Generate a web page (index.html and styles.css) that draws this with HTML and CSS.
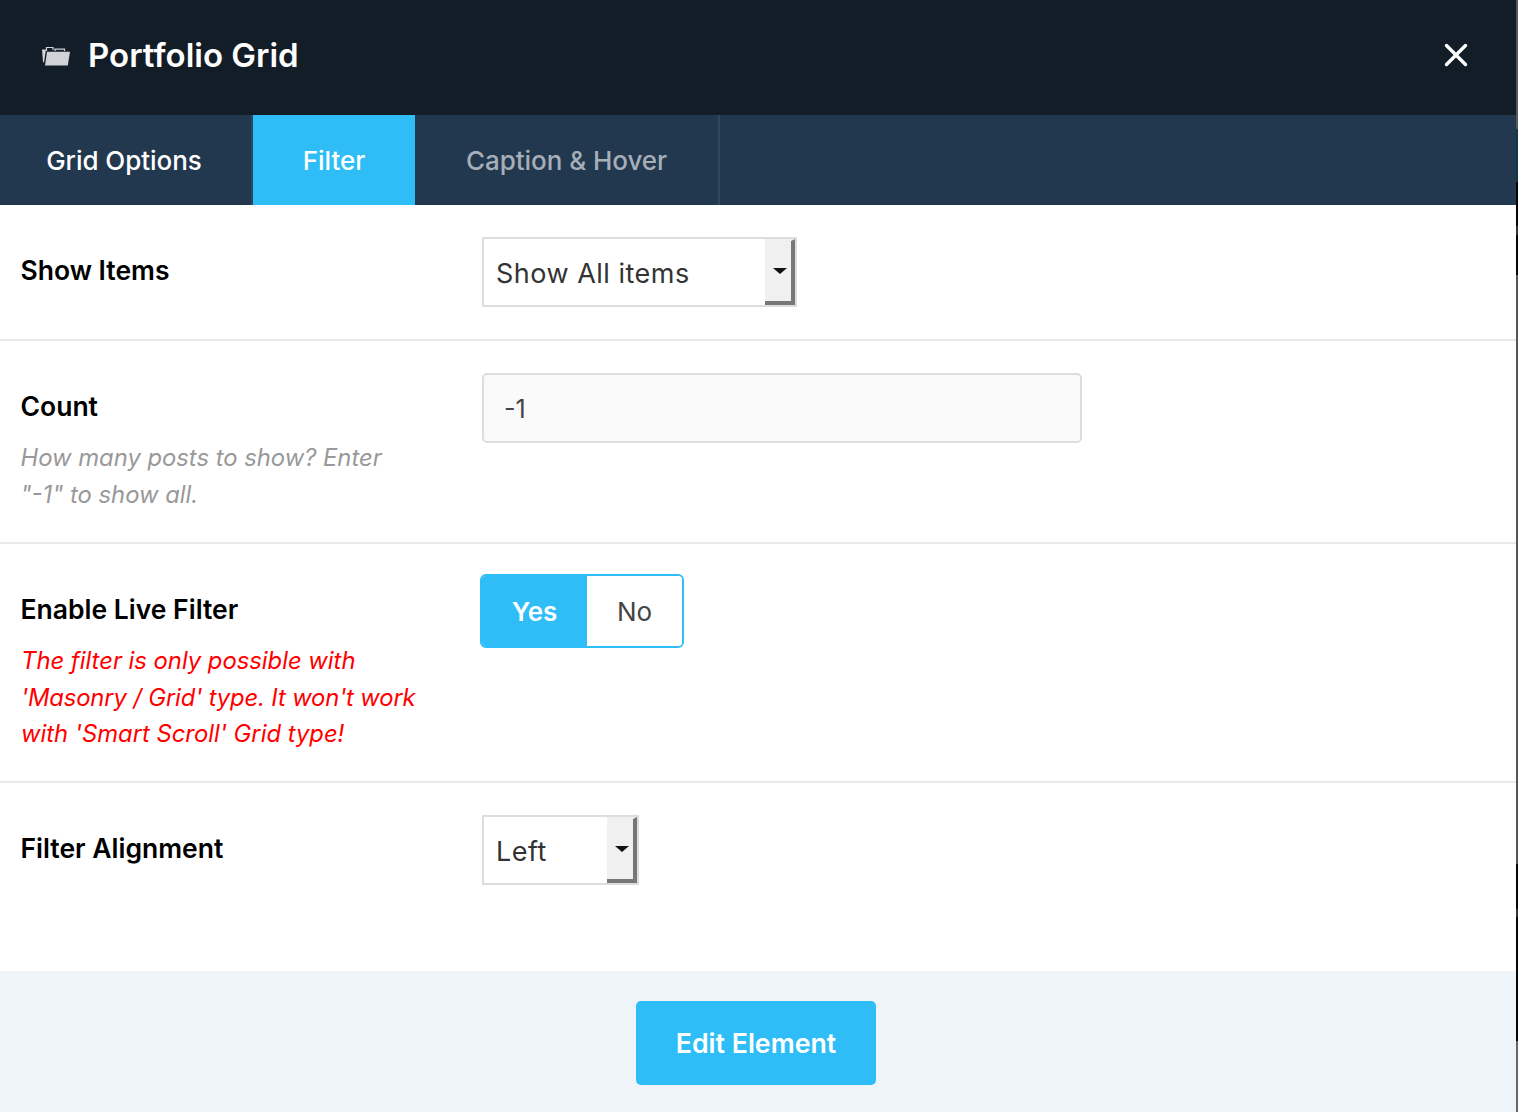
FILE: index.html
```html
<!DOCTYPE html>
<html lang="en">
<head>
<meta charset="utf-8">
<title>Portfolio Grid</title>
<link rel="stylesheet" href="styles.css">
</head>
<body>
<div class="modal">
  <header class="head">
    <svg class="folder" viewBox="0 0 28 20" width="28" height="20" aria-hidden="true">
      <path d="M4.500 5V1.500H11V4M13 5V3.200H22.500V5" fill="none" stroke="#cfd3d7" stroke-width="1.200"/>
      <path d="M5 5.800H28L25.800 19.500H3z" fill="#cfd3d7"/>
      <path d="M0 3.500H4L2 16.500 1 16z" fill="#cfd3d7"/>
    </svg>
    <h1 class="title">Portfolio Grid</h1>
    <svg class="close" viewBox="0 0 24 24" width="24" height="24" aria-hidden="true">
      <path d="M2.500 2.500 21.500 21.500M21.500 2.500 2.500 21.500" stroke="#fff" stroke-width="3.400" stroke-linecap="round"/>
    </svg>
  </header>
  <nav class="tabs">
    <a class="tab tab-first">Grid Options</a>
    <a class="tab tab-active">Filter</a>
    <a class="tab tab-muted">Caption &amp; Hover</a>
  </nav>
  <main class="body">
    <section class="row row-show">
      <div class="label-col"><div class="label">Show Items</div></div>
      <div class="select select-wide"><span class="select-text">Show All items</span><span class="select-btn"><i class="arrow"></i></span></div>
    </section>
    <section class="row row-count">
      <div class="label-col">
        <div class="label">Count</div>
        <p class="hint">How many posts to show? Enter<br>"-1" to show all.</p>
      </div>
      <div class="input">-1</div>
    </section>
    <section class="row row-live">
      <div class="label-col">
        <div class="label">Enable Live Filter</div>
        <p class="hint hint-red">The filter is only possible with<br><span class="tight">'Masonry / Grid' type. It won't work</span><br>with 'Smart Scroll' Grid type!</p>
      </div>
      <div class="toggle"><span class="yes">Yes</span><span class="no">No</span></div>
    </section>
    <section class="row row-align">
      <div class="label-col"><div class="label">Filter Alignment</div></div>
      <div class="select select-narrow"><span class="select-text">Left</span><span class="select-btn"><i class="arrow"></i></span></div>
    </section>
  </main>
  <footer class="foot"><a class="submit">Edit Element</a></footer>
</div>
<div class="edge"></div>
</body>
</html>
```
FILE: styles.css
```css
* { box-sizing: border-box; }
html, body { margin: 0; padding: 0; height: 100%; background: #fff; overflow: hidden; }
body { font-family: Inter, "Liberation Sans", sans-serif; position: relative; }
.modal { width: 1516px; height: 1112px; display: flex; flex-direction: column; }
.head { height: 115px; background: #131d28; display: flex; align-items: center; padding: 0 48px 5px 42px; flex: none; }
.folder { flex: none; margin-right: 18px; margin-top: 1px; }
.title { margin: 0; flex: 1; color: #fff; font-size: 33px; font-weight: 600; }
.close { flex: none; }
.tabs { height: 90px; background: #22384e; display: flex; flex: none; }
.tab { display: flex; align-items: center; justify-content: center; font-size: 26px; font-weight: 500; color: #fff; border-right: 2px solid #2c475f; letter-spacing: -0.05px; }
.tab-first { width: 253px; padding-right: 3px; }
.tab-active { width: 162px; background: #2ebdf6; border-right: 0; }
.tab-muted { width: 305px; color: #a6afb8; }
.body { flex: 1; display: flex; flex-direction: column; }
.row { display: flex; padding: 32px 0 0 20px; border-bottom: 2px solid #e9e9e9; }
.row-show { height: 136px; }
.row-count { height: 203px; }
.row-live { height: 239px; padding-top: 30px; }
.row-align { flex: 1; border-bottom: 0; }
.label-col { width: 462px; flex: none; }
.label { font-size: 26.500px; font-weight: 600; color: #000; line-height: 30px; margin-top: 18px; padding-left: 0.5px; }
.row-live .label { margin-top: 20px; }
.hint { margin: 19px 0 0; font-size: 23.800px; font-style: italic; color: #999; line-height: 36.700px; padding-left: 0.5px; }
.hint-red { color: #f00; padding-left: 1px; }
.tight { letter-spacing: -0.14px; }
.select { height: 70px; border: 2px solid #ddd; display: flex; background: #fff; }
.select-wide { width: 315px; }
.select-narrow { width: 157px; }
.select-text { flex: 1; font-size: 27px; color: #333; padding: 1px 0 0 12px; line-height: 68px; letter-spacing: 0.5px; }
.select-btn { width: 30px; height: 66px; border-style: solid; border-width: 2px 4px 4px 0; border-color: #f0f0f0 #777 #777 #f0f0f0; background: #f0f0f0; display: flex; align-items: center; justify-content: center; }
.arrow { width: 0; height: 0; border-style: solid; border-width: 6px 7px 0; border-color: #111 transparent transparent; margin-left: 3px; }
.input { width: 600px; height: 70px; border: 2px solid #ddd; border-radius: 5px; background: #fafafa; font-size: 25px; color: #444; padding: 1px 0 0 20px; line-height: 66px; }
.toggle { width: 204px; height: 74px; margin-left: -2px; display: flex; border: 2px solid #2ebdf6; border-radius: 6px; overflow: hidden; font-size: 26px; font-weight: 500; }
.yes { width: 105px; background: #2ebdf6; color: #fff; display: flex; align-items: center; justify-content: center; font-weight: 600; }
.no { flex: 1; background: #fff; color: #444; display: flex; align-items: center; justify-content: center; font-weight: 400; }
.foot { height: 141px; background: #eff4f8; display: flex; justify-content: center; padding: 30px 4px 0 0; flex: none; }
.submit { width: 240px; height: 84px; background: #2ebdf6; border-radius: 5px; color: #fff; font-size: 26.700px; font-weight: 600; display: flex; align-items: center; justify-content: center; }
.edge { position: absolute; top: 0; right: 0; width: 2px; height: 1112px; background: linear-gradient(#55585a 0 129px, #0e3a47 129px 182px, #040608 182px 226px, #333 226px 235px, #040608 235px 275px, #555 275px 864px, #040608 864px 909px, #333 909px 917px, #040608 917px 1041px, #666 1041px); }
```
